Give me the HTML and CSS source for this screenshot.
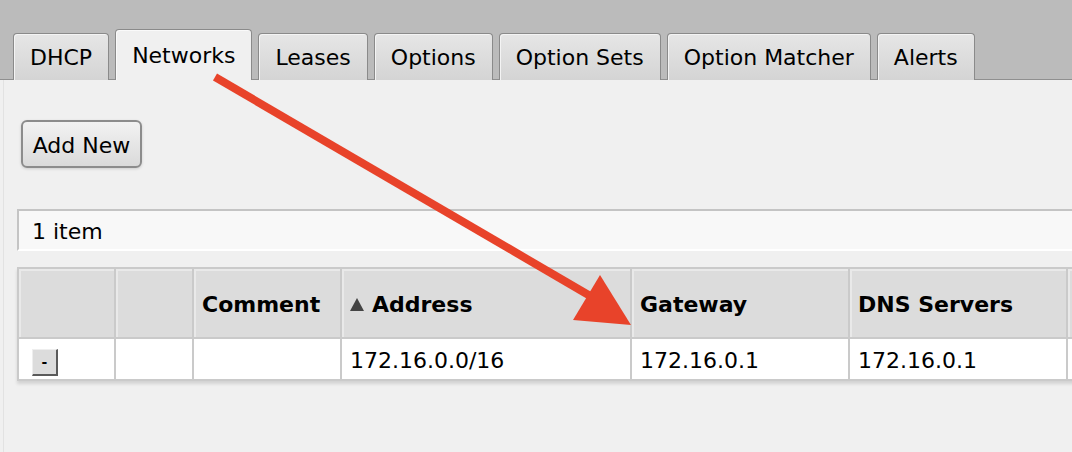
FILE: index.html
```html
<!DOCTYPE html>
<html>
<head>
<meta charset="utf-8">
<link rel="stylesheet" href="styles.css">
</head>
<body>
<div class="page">
  <div class="tabbar">
    <div class="tab">DHCP</div>
    <div class="tab active">Networks</div>
    <div class="tab">Leases</div>
    <div class="tab">Options</div>
    <div class="tab">Option Sets</div>
    <div class="tab">Option Matcher</div>
    <div class="tab">Alerts</div>
  </div>
  <div class="content">
    <div class="toolbar"><button class="btn">Add New</button></div>
    <div class="count">1 item</div>
    <div class="grid">
      <div class="hcell"></div>
      <div class="hcell"></div>
      <div class="hcell">Comment</div>
      <div class="hcell"><span class="sort"></span>Address</div>
      <div class="hcell">Gateway</div>
      <div class="hcell">DNS Servers</div>
      <div class="hcell"></div>
      <div class="dcell"><span class="minus">-</span></div>
      <div class="dcell"></div>
      <div class="dcell"></div>
      <div class="dcell">172.16.0.0/16</div>
      <div class="dcell">172.16.0.1</div>
      <div class="dcell">172.16.0.1</div>
      <div class="dcell"></div>
    </div>
  </div>
  <svg class="arrow" width="1072" height="452" viewBox="0 0 1072 452">
    <line x1="215" y1="77" x2="592" y2="297" stroke="#e8432a" stroke-width="8"/>
    <polygon points="631,325 600,275 573,320" fill="#e8432a"/>
  </svg>
</div>
</body>
</html>
```

FILE: styles.css
```css
html, body {
  margin: 0;
  padding: 0;
  overflow: hidden;
  width: 1072px;
  height: 452px;
  background: #f0f0f0;
}
.page {
  position: relative;
  width: 1072px;
  height: 452px;
  overflow: hidden;
  font-family: "DejaVu Sans", Verdana, sans-serif;
  font-size: 22px;
  color: #000;
}
.tabbar {
  height: 80px;
  background: #bbbbbb;
  border-bottom: 1px solid #8f8f8f;
  box-sizing: border-box;
  display: flex;
  align-items: flex-end;
  gap: 6px;
  padding-left: 13px;
}
.tab {
  height: 47px;
  box-sizing: border-box;
  padding: 0 16px;
  display: flex;
  align-items: center;
  border: 1px solid #8a8a8a;
  border-bottom: none;
  border-radius: 4px 4px 0 0;
  background: linear-gradient(#e6e6e6, #d4d4d4);
  box-shadow: inset 1px 1px 0 #f4f4f4;
  margin-bottom: -1px;
}
.tab.active {
  height: 51px;
  background: #f0f0f0;
  box-shadow: inset 1px 1px 0 #fafafa;
}
.content {
  margin-left: 3px;
  border-left: 1px solid #e2e2e2;
  padding: 40px 0 0 13px;
  overflow: hidden;
  height: 372px;
  box-sizing: border-box;
}
.toolbar {
  padding-left: 4px;
}
.btn {
  font: inherit;
  color: #000;
  height: 48px;
  width: 121px;
  border: 2px solid #8c8c8c;
  border-radius: 6px;
  background: linear-gradient(#f2f2f2, #dadada);
  box-shadow: 0 1px 3px rgba(0,0,0,0.15);
  padding: 2px 0 0;
  margin: 0;
}
.count {
  margin-top: 41px;
  height: 42px;
  box-sizing: border-box;
  border-top: 2px solid #c4c4c4;
  border-left: 2px solid #c4c4c4;
  border-bottom: 2px solid #ffffff;
  background: #f8f8f8;
  display: flex;
  align-items: center;
  padding-left: 13px;
  padding-top: 2px;
  width: 1200px;
}
.grid {
  margin-top: 16px;
  display: grid;
  grid-template-columns: 97px 78px 148px 290px 218px 218px 200px;
  grid-template-rows: 70px 42px;
  border-top: 2px solid #cacaca;
  border-left: 2px solid #cacaca;
  width: max-content;
  box-shadow: 0 3px 3px rgba(0,0,0,0.12);
}
.hcell, .dcell {
  box-sizing: border-box;
  border-right: 2px solid #cacaca;
  border-bottom: 2px solid #cacaca;
  display: flex;
  align-items: center;
  padding-left: 8px;
}
.hcell {
  background: #dcdcdc;
  box-shadow: inset 2px 2px 0 #e9e9e9;
  font-weight: bold;
  padding-top: 2px;
}
.dcell {
  background: #ffffff;
  padding-top: 2px;
}
.sort {
  width: 0;
  height: 0;
  border-left: 7px solid transparent;
  border-right: 7px solid transparent;
  border-bottom: 13px solid #444;
  margin-right: 8px;
  margin-top: 1px;
}
.minus {
  margin-left: 5px;
  margin-top: 4px;
  width: 26px;
  height: 27px;
  box-sizing: border-box;
  background: #dcdcdc;
  border-top: 1px solid #eeeeee;
  border-left: 1px solid #eeeeee;
  border-right: 2px solid #5a5a5a;
  border-bottom: 2px solid #5a5a5a;
  font-size: 14px;
  font-weight: bold;
  display: flex;
  align-items: center;
  justify-content: center;
}
.arrow {
  position: absolute;
  left: 0;
  top: 0;
  pointer-events: none;
}
```
